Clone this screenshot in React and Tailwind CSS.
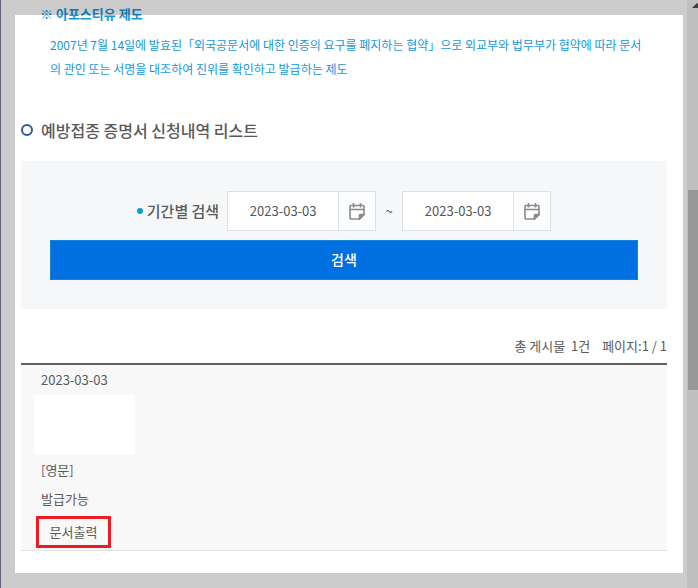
import React, { useState } from "react";

const CalendarIcon = () => (
  <svg width="16" height="17" viewBox="0 0 16 17" fill="none" stroke="#8a8a8a" strokeWidth="1.6" aria-hidden="true">
    <path d="M1 6.5V3.2Q1 2.5 1.7 2.5H14.3Q15 2.5 15 3.2V11.5L10.5 16H1.7Q1 16 1 15.3V6.5H15" />
    <path d="M4.5 0V4.5M11.5 0V4.5" />
    <path d="M10.5 16V12.3Q10.5 11.5 11.3 11.5H15Z" fill="#8a8a8a" />
  </svg>
);

const DateField = ({ id, label, value, onChange }) => (
  <div className="flex h-10 border border-[#dde0e6] bg-white">
    <input
      id={id}
      type="text"
      aria-label={label}
      value={value}
      onChange={(e) => onChange(e.target.value)}
      className="w-[110px] text-center text-[13px] text-[#555] outline-none"
    />
    <button
      type="button"
      aria-label={`${label} 달력`}
      className="flex w-[37px] items-center justify-center border-l border-[#dde0e6] bg-[#fcfdff]"
    >
      <CalendarIcon />
    </button>
  </div>
);

const SearchPanel = () => {
  const [from, setFrom] = useState("2023-03-03");
  const [to, setTo] = useState("2023-03-03");

  return (
    <form className="mt-[19px] bg-[#f5f7f9] px-[29px] pt-[30px] pb-[29px]" onSubmit={(e) => e.preventDefault()}>
      <div className="flex items-center justify-center">
        <span className="mr-1 h-1.5 w-1.5 rounded-full bg-[#0a9be0]" />
        <label htmlFor="from" className="mr-2 text-[15px] font-medium whitespace-nowrap">
          기간별 검색
        </label>
        <DateField id="from" label="시작일" value={from} onChange={setFrom} />
        <span className="w-[26px] text-center text-[13px]">~</span>
        <DateField id="to" label="종료일" value={to} onChange={setTo} />
      </div>
      <button
        type="submit"
        className="mt-[9px] h-10 w-full border border-[#1583d8] bg-[#0070e0] pb-0.5 text-[14px] font-medium text-white"
      >
        검색
      </button>
    </form>
  );
};

const RequestList = () => (
  <ul className="mt-[5px] border-t-2 border-[#5e615f]">
    <li className="border-b border-[#e2e2e2] bg-[#f8f8f8] pb-0.5 text-[13px]">
      <div className="px-5 leading-[30px]">2023-03-03</div>
      <div className="ml-[13px] h-[60px] w-[101px] bg-white" />
      <div className="px-5 leading-[29px]">[영문]</div>
      <div className="px-5 leading-[29px]">발급가능</div>
      <button
        type="button"
        className="mt-[3px] ml-[15px] flex h-8 w-[75px] items-center justify-center border-3 border-[#ed1c24]"
      >
        문서출력
      </button>
    </li>
  </ul>
);

const App = () => (
  <div className="flex min-h-screen bg-white font-['Noto_Sans_CJK_KR','Noto_Sans',sans-serif] text-[#5a5a5a]">
    <div className="w-px bg-[#62657d]" />
    <main className="relative min-w-0 flex-1 px-5 pt-0.5 pb-9">
      <section className="text-[#1497dc]">
        <h3 className="ml-[19px] text-[13px] leading-6 font-bold">※ 아포스티유 제도</h3>
        <p className="mt-[7px] ml-[29px] text-[12px] leading-6 whitespace-nowrap">
          2007년 7월 14일에 발효된「외국공문서에 대한 인증의 요구를 폐지하는 협약」으로 외교부와 법무부가 협약에 따라 문서
          <br />
          의 관인 또는 서명을 대조하여 진위를 확인하고 발급하는 제도
        </p>
      </section>

      <h2 className="mt-[37px] flex items-center gap-2 text-[16px] leading-6 font-medium">
        <span className="h-3 w-3 rounded-full border-2 border-[#3157a4]" />
        예방접종 증명서 신청내역 리스트
      </h2>
      <SearchPanel />

      <div className="mt-[25px] flex justify-end gap-3 text-[13px] leading-6">
        <span>총 게시물&nbsp; 1건</span>
        <span>페이지:1 / 1</span>
      </div>
      <RequestList />

      {/* dimmed frame around the page */}
      <div className="pointer-events-none absolute inset-0 border-t-[15px] border-r-4 border-b-[15px] border-l-[14px] border-black/20" />
    </main>
    <div className="w-[11px] overflow-hidden bg-[#c0c0c0] pt-[3px] pl-px">
      <svg className="ml-1" width="10" height="5" viewBox="0 0 10 5" aria-hidden="true">
        <path d="M0 5L5 0L10 5Z" fill="#404040" />
      </svg>
      <div className="mt-[182px] h-[200px] bg-[#999]" />
    </div>
  </div>
);

export default App;
